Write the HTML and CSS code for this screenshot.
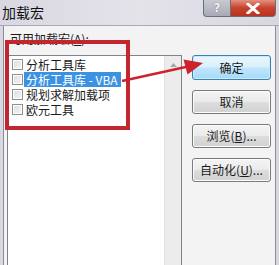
FILE: index.html
```html
<!DOCTYPE html>
<html>
<head>
<meta charset="utf-8">
<link rel="stylesheet" href="styles.css">
</head>
<body>
<div class="window">
  <div class="titlebar">
    <span class="title">加载宏</span>
    <div class="caption-btns">
      <span class="help">?</span>
      <span class="close">
        <svg width="14" height="11" viewBox="0 0 14 11"><path d="M2 1 L12 10 M12 1 L2 10" stroke="#fff" stroke-width="3" stroke-linecap="square"/></svg>
      </span>
    </div>
  </div>
  <div class="frame">
    <div class="client">
      <div class="left">
        <div class="label">可用加载宏(<u>A</u>):</div>
        <div class="listbox">
          <ul class="items">
            <li class="item"><span class="check"></span><span class="text">分析工具库</span></li>
            <li class="item focus"><span class="check"></span><span class="text sel">分析工具库 - VBA</span></li>
            <li class="item"><span class="check"></span><span class="text">规划求解加载项</span></li>
            <li class="item"><span class="check"></span><span class="text">欧元工具</span></li>
          </ul>
          <div class="scrollbar">
            <svg width="7" height="4" viewBox="0 0 7 4" class="up"><path d="M0 4 L3.5 0 L7 4 Z" fill="#a8a8a8"/></svg>
          </div>
        </div>
      </div>
      <div class="buttons">
        <button class="btn default">确定</button>
        <button class="btn">取消</button>
        <button class="btn">浏览(<u>B</u>)...</button>
        <button class="btn">自动化(<u>U</u>)...</button>
      </div>
    </div>
  </div>
  <div class="mark"></div>
  <svg class="arrow" width="279" height="265" viewBox="0 0 279 265">
    <line x1="122" y1="81" x2="188" y2="66.5" stroke="#d0222c" stroke-width="2.5"/>
    <path d="M203 63 L183.5 59.5 L187.5 74.5 Z" fill="#d0222c"/>
  </svg>
</div>
</body>
</html>
```

FILE: styles.css
```css
html, body {
  margin: 0;
  padding: 0;
  background: #d6d6da;
}
.window {
  position: relative;
  width: 279px;
  height: 265px;
  overflow: hidden;
  display: flex;
  flex-direction: column;
  font-family: "Noto Sans CJK SC", "Liberation Sans", sans-serif;
  font-size: 12px;
  color: #1a1a1a;
  background: linear-gradient(to right, #d9d8e2, #e4e3ea 50%, #d8d7e0);
}
.titlebar {
  height: 25px;
  flex: none;
  display: flex;
  align-items: flex-start;
  justify-content: space-between;
  border-bottom: 1px solid #a9abb4;
}
.title {
  margin: 3px 0 0 2px;
  font-size: 14px;
  line-height: 18px;
  color: #111;
}
.caption-btns {
  display: flex;
  margin-right: 3px;
}
.help, .close {
  height: 17px;
  display: flex;
  align-items: center;
  justify-content: center;
  box-sizing: border-box;
  border: 1px solid #6b6e78;
  border-top: none;
}
.help {
  width: 27px;
  border-radius: 0 0 0 4px;
  border-right: none;
  background: linear-gradient(#c8cad2, #a7aab5);
  color: #f4f4f4;
  font-family: "DejaVu Sans", sans-serif;
  font-weight: bold;
  font-size: 12px;
  text-shadow: 0 0 1px #555;
}
.close {
  width: 46px;
  border-radius: 0 0 4px 0;
  background: linear-gradient(#e3907f, #c8412c 50%, #b93420);
}
.frame {
  flex: 1;
  display: flex;
  padding: 0 3px 0 3px;
}
.client {
  flex: 1;
  display: flex;
  background: #f3f3f4;
  border-left: 1px solid #8b8d96;
  border-right: 1px solid #8b8d96;
  padding: 0 0 0 3px;
}
.left {
  display: flex;
  flex-direction: column;
  width: 175px;
}
.label {
  margin: 5px 0 0 3px;
  line-height: 16px;
  height: 16px;
}
.listbox {
  margin-top: 8px;
  flex: 1;
  display: flex;
  background: #fff;
  border: 1px solid #7e828c;
  border-bottom: none;
}
.items {
  list-style: none;
  margin: 0;
  padding: 1px 0 0 0;
  flex: 1;
}
.item {
  height: 15px;
  display: flex;
  align-items: center;
}
.check {
  width: 11px;
  height: 11px;
  box-sizing: border-box;
  margin-left: 4px;
  border: 1px solid #8e8f8f;
  background: linear-gradient(135deg, #dcdcdc, #f6f6f6);
  box-shadow: inset 0 0 0 1px #fff;
  flex: none;
}
.text {
  margin-left: 1px;
  padding: 0 3px 0 2px;
  line-height: 15px;
  height: 15px;
  white-space: nowrap;
}
.text.sel {
  background: #3b92e3;
  color: #fff;
}
.scrollbar {
  width: 16px;
  flex: none;
  background: #ececec;
  border-left: 1px solid #e2e2e2;
  display: flex;
  justify-content: center;
}
.up {
  margin-top: 7px;
}
.buttons {
  margin-left: 10px;
  margin-top: 29px;
  display: flex;
  flex-direction: column;
  gap: 10px;
  width: 79px;
}
.btn {
  height: 24px;
  width: 79px;
  box-sizing: border-box;
  border: 1px solid #7a7a7a;
  border-radius: 3px;
  background: linear-gradient(#f4f4f4, #ebebeb 48%, #dddddd 52%, #d1d1d1);
  box-shadow: inset 0 0 0 1px #fcfcfc;
  font-family: "Noto Sans CJK SC", "Liberation Sans", sans-serif;
  font-size: 12px;
  color: #1a1a1a;
  padding: 0;
  line-height: 20px;
}
.btn.default {
  height: 25px;
  border-color: #3c7fb1;
  background: linear-gradient(#eaf6fd, #d9f0fc 48%, #bee6fd 52%, #a7d9f5);
  box-shadow: inset 0 0 0 1px #c8ecfc;
}
.mark {
  position: absolute;
  left: 5px;
  top: 40px;
  width: 117px;
  height: 82px;
  border: 4px solid #c3262e;
}
.arrow {
  position: absolute;
  left: 0;
  top: 0;
}
```
